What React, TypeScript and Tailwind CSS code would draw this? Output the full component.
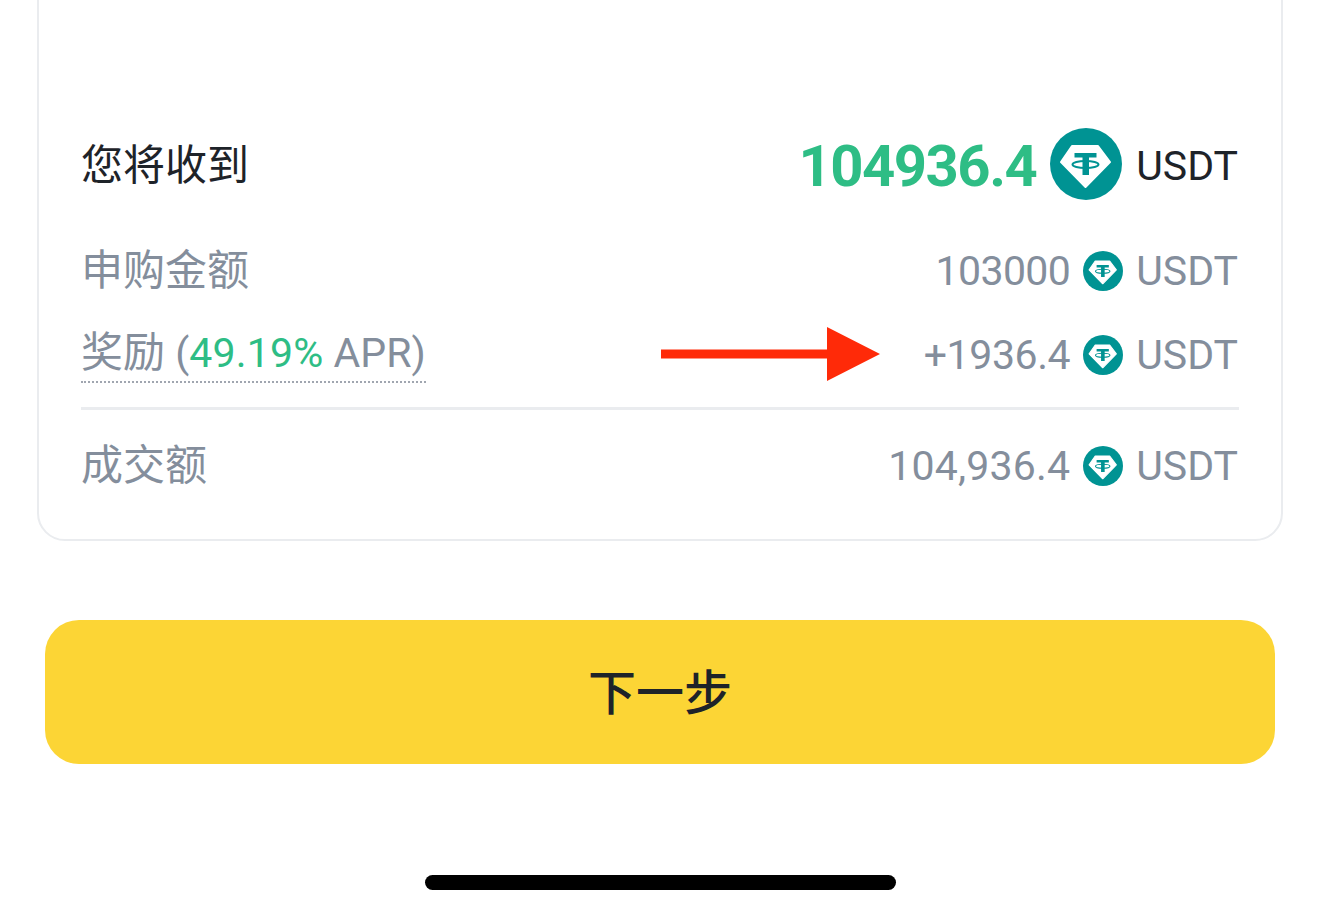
const font = "font-['Roboto','Noto_Sans_CJK_SC',sans-serif]";

function Tether({ size }: { size: number }) {
  return (
    <svg width={size} height={size} viewBox="0 0 72 72" className="shrink-0">
      <circle cx="36" cy="36" r="36" fill="#009393" />
      <path d="M22 18H48L60 34L35.5 59L11 34Z" fill="#fff" strokeLinejoin="round" stroke="#fff" strokeWidth="2" />
      <path d="M24.5 25H46.5V29.5H39V47H32.5V29.5H24.5Z" fill="#009393" />
      <ellipse cx="35.5" cy="36.5" rx="13" ry="3.6" fill="none" stroke="#009393" strokeWidth="2" />
    </svg>
  );
}

function Row({ label, value, h, mt, valueClass }: { label: React.ReactNode; value: string; h: string; mt: string; valueClass: string }) {
  return (
    <div className={`flex items-center justify-between text-[#848e9c] ${h} ${mt}`}>
      <div className="text-[42px] leading-none">{label}</div>
      <div className="flex items-center">
        <span className={`text-[41px] leading-none ${valueClass}`}>{value}</span>
        <span className="ml-[13px]"><Tether size={40} /></span>
        <span className="ml-[13px] text-[41px] leading-none">USDT</span>
      </div>
    </div>
  );
}

export default function App() {
  return (
    <div className={`relative h-[914px] w-[1320px] overflow-hidden bg-white ${font}`}>
      <div className="-mt-[40px] ml-[37px] h-[581px] w-[1246px] rounded-[28px] border-2 border-[#eaecef] pl-[42px] pr-[43px] pt-[168px]">
        <div className="flex h-[72px] items-center justify-between text-[#1e2329]">
          <div className="text-[42px] leading-none">您将收到</div>
          <div className="flex items-center">
            <span className="text-[58px] font-bold leading-none tracking-[-1.5px] text-[#2ebd85]">104936.4</span>
            <span className="mb-[4px] ml-[14px]"><Tether size={72} /></span>
            <span className="ml-[14px] text-[41px] leading-none">USDT</span>
          </div>
        </div>
        <Row h="h-[40px]" mt="mt-[49px]" label="申购金额" value="103000" valueClass="tracking-[-0.6px]" />
        <div className="relative">
          <Row
            h="h-[40px]"
            mt="mt-[44px]"
            valueClass="tracking-[-0.4px]"
            label={
              <span className="inline-block border-b-2 border-dotted border-[#a0a6b0] pb-[3px] leading-[50px]">
                奖励<span className="text-[41px]"> (<span className="tracking-[0.2px] text-[#2ebd85]">49.19%</span> APR)</span>
              </span>
            }
            value="+1936.4"
          />
          <svg width="220" height="54" viewBox="0 0 220 54" className="absolute left-[580px] top-[-8px]">
            <path d="M0 22.5H166V0L219 27L166 54V31.5H0Z" fill="#ff2a08" />
          </svg>
        </div>
        <div className="-mr-px mt-[32px] h-[3px] bg-[#eaecef]" />
        <Row h="h-[40px]" mt="mt-[36px]" label="成交额" value="104,936.4" valueClass="tracking-[0.2px]" />
      </div>
      <button className="ml-[45px] mt-[79px] flex h-[144px] w-[1230px] items-center justify-center rounded-[34px] bg-[#fcd535] pt-[3px] text-[48px] font-medium text-[#1e2329]">
        下一步
      </button>
      <div className="ml-[425px] mt-[111px] h-[15px] w-[471px] rounded-full bg-black" />
    </div>
  );
}
